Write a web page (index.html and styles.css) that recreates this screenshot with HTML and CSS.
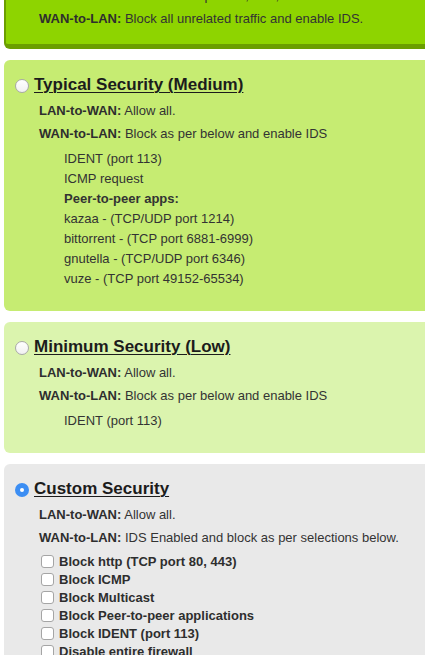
FILE: index.html
```html
<!DOCTYPE html>
<html>
<head>
<meta charset="utf-8">
<link rel="stylesheet" href="styles.css">
</head>
<body>
<div class="page">
  <section class="box box-high">
    <label class="title-row"><input type="radio" name="sec" class="radio"><span class="title">Maximum Security (High)</span></label>
    <p class="rule"><b>LAN-to-WAN:</b> Block all except Web, FTP, Email and IM.</p>
    <p class="rule"><b>WAN-to-LAN:</b> Block all unrelated traffic and enable IDS.</p>
  </section>

  <section class="box box-medium">
    <label class="title-row"><input type="radio" name="sec" class="radio"><span class="title">Typical Security (Medium)</span></label>
    <p class="rule"><b>LAN-to-WAN:</b> Allow all.</p>
    <p class="rule"><b>WAN-to-LAN:</b> Block as per below and enable IDS</p>
    <ul class="list">
      <li>IDENT (port 113)</li>
      <li>ICMP request</li>
      <li><b>Peer-to-peer apps:</b></li>
      <li>kazaa - (TCP/UDP port 1214)</li>
      <li>bittorrent - (TCP port 6881-6999)</li>
      <li>gnutella - (TCP/UDP port 6346)</li>
      <li>vuze - (TCP port 49152-65534)</li>
    </ul>
  </section>

  <section class="box box-low">
    <label class="title-row"><input type="radio" name="sec" class="radio"><span class="title">Minimum Security (Low)</span></label>
    <p class="rule"><b>LAN-to-WAN:</b> Allow all.</p>
    <p class="rule"><b>WAN-to-LAN:</b> Block as per below and enable IDS</p>
    <ul class="list">
      <li>IDENT (port 113)</li>
    </ul>
  </section>

  <section class="box box-custom">
    <label class="title-row"><input type="radio" name="sec" class="radio" checked><span class="title">Custom Security</span></label>
    <p class="rule"><b>LAN-to-WAN:</b> Allow all.</p>
    <p class="rule"><b>WAN-to-LAN:</b> IDS Enabled and block as per selections below.</p>
    <div class="checks">
      <label class="check"><input type="checkbox" class="cb"><span>Block http (TCP port 80, 443)</span></label>
      <label class="check"><input type="checkbox" class="cb"><span>Block ICMP</span></label>
      <label class="check"><input type="checkbox" class="cb"><span>Block Multicast</span></label>
      <label class="check"><input type="checkbox" class="cb"><span>Block Peer-to-peer applications</span></label>
      <label class="check"><input type="checkbox" class="cb"><span>Block IDENT (port 113)</span></label>
      <label class="check"><input type="checkbox" class="cb"><span>Disable entire firewall</span></label>
    </div>
  </section>
</div>
</body>
</html>
```

FILE: styles.css
```css
html, body {
  margin: 0;
  padding: 0;
  background: #ffffff;
  overflow: hidden;
}

body {
  font-family: "Liberation Sans", Arial, Helvetica, sans-serif;
  font-size: 13px;
  color: #333333;
}

.page {
  display: flex;
  flex-direction: column;
  gap: 11px;
  padding-left: 4px;
}

.box {
  border-radius: 6px 0 0 6px;
  padding: 14px 0 22px 0;
}

.box-high {
  background: #8ed400;
  border-left: 2px solid #6b9e00;
  border-bottom: 5px solid #6b9e00;
  margin-top: -55px;
  padding-bottom: 14px;
  padding-left: 0;
}

.box-high .title-row { margin-left: 9px; }
.box-high .rule { margin-left: 33px; }

.box-medium { background: #c6ec72; }
.box-low { background: #dbf4ae; }
.box-custom { background: #e9e9e9; }

.title-row {
  display: flex;
  align-items: center;
  gap: 5px;
  margin-left: 11px;
  height: 22px;
  margin-bottom: 3px;
}

.title {
  font-size: 17px;
  font-weight: bold;
  color: #1c1c1c;
  text-decoration: underline;
  text-underline-offset: 2px;
  text-decoration-thickness: 1px;
  line-height: 22px;
}

.radio {
  -webkit-appearance: none;
  appearance: none;
  margin: 2px 0 0 0;
  width: 14px;
  height: 14px;
  border-radius: 50%;
  border: 1px solid #a9a9a9;
  background: linear-gradient(#ffffff, #f1f1f1);
  box-sizing: border-box;
  flex: none;
  position: relative;
}

.radio:checked {
  border: none;
  background: #3c8ef3;
}

.radio:checked::after {
  content: "";
  position: absolute;
  left: 5px;
  top: 5px;
  width: 4px;
  height: 4px;
  border-radius: 50%;
  background: #ffffff;
}

.rule {
  margin: 0 0 0 35px;
  line-height: 23px;
}

.rule b {
  color: #2e2e2e;
}

.list {
  list-style: none;
  margin: 4px 0 0 60px;
  padding: 0;
}

.list li {
  line-height: 20px;
}

.checks {
  display: flex;
  flex-direction: column;
  margin: 3px 0 0 37px;
}

.check {
  display: flex;
  align-items: center;
  gap: 5px;
  height: 18px;
  font-weight: bold;
  color: #2e2e2e;
}

.cb {
  -webkit-appearance: none;
  appearance: none;
  margin: 0;
  width: 13px;
  height: 13px;
  border: 1px solid #a5a5a5;
  border-radius: 3px;
  background: #ffffff;
  box-sizing: border-box;
  flex: none;
}
```
